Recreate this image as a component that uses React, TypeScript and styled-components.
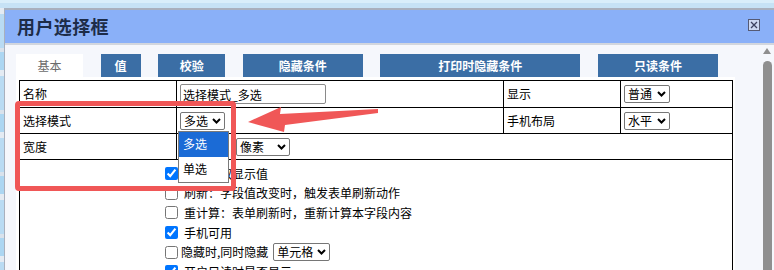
import React from "react";
import styled, { createGlobalStyle } from "styled-components";

const GlobalStyle = createGlobalStyle`
  html, body { margin: 0; padding: 0; }
  body {
    width: 774px;
    height: 270px;
    overflow: hidden;
    background: #d3e7f5;
    font-family: "Noto Sans CJK SC", "Noto Sans", sans-serif;
    font-size: 12px;
    color: #000;
  }
  * { box-sizing: border-box; }
`;

const Page = styled.div`
  position: relative;
  width: 774px;
  height: 270px;
  display: flex;
  flex-direction: column;
  overflow: hidden;
`;

const TopStrip = styled.div`
  height: 8px;
  flex: none;
  background: linear-gradient(#d9eefa 0 3px, #c6e2f5 3px 100%);
`;

const Stage = styled.div`
  flex: 1;
  display: flex;
  min-height: 0;
`;

const LeftStrip = styled.div`
  width: 4px;
  flex: none;
  background: repeating-linear-gradient(
    to bottom,
    #e4ebf3 0 6px,
    #b9dbf3 6px 40px,
    #d9e2ec 40px 44px,
    #acd6f2 44px 62px
  );
`;

const Window = styled.div`
  flex: 1;
  display: flex;
  flex-direction: column;
  border-top: 2px solid #a9b0bd;
  border-left: 1px solid #a9b0bd;
  min-width: 0;
`;

const Header = styled.div`
  height: 35px;
  flex: none;
  display: flex;
  align-items: center;
  justify-content: space-between;
  padding: 0 14px 2px 12px;
  background: #8ab0f8;
  border-bottom: 2px solid #d2d6de;
`;

const Title = styled.div`
  font-size: 18px;
  font-weight: bold;
  letter-spacing: 0.4px;
  color: #1d2c48;
  line-height: 1;
`;

const CloseBox = styled.div`
  width: 12px;
  height: 12px;
  display: flex;
  margin-top: -1px;
`;

const Body = styled.div`
  flex: 1;
  display: flex;
  background: #f5f7fc;
  min-height: 0;
`;

const Main = styled.div`
  width: 730px;
  flex: none;
  display: flex;
  flex-direction: column;
  padding: 9px 0 0 11px;
`;

const Tabs = styled.div`
  display: flex;
  gap: 17.6px;
  height: 23px;
  flex: none;
`;

const Tab = styled.div<{ $w: number; $active?: boolean }>`
  width: ${(p) => p.$w}px;
  height: 23px;
  display: flex;
  align-items: center;
  justify-content: center;
  background: ${(p) => (p.$active ? "#ffffff" : "#3b6ea5")};
  color: ${(p) => (p.$active ? "#6b6b6b" : "#ffffff")};
  font-weight: ${(p) => (p.$active ? "normal" : "bold")};
  font-size: 12px;
`;

const Panel = styled.div`
  width: 719px;
  flex: 1;
  background: #ffffff;
  padding: 3px 3px 0 3px;
`;

const Table = styled.table`
  width: 713px;
  border-collapse: collapse;
  table-layout: fixed;
`;

const Row = styled.tr<{ $h?: number }>`
  height: ${(p) => (p.$h ? `${p.$h}px` : "auto")};
`;

const Cell = styled.td`
  border: 1px solid #000;
  padding: 0 3px;
  vertical-align: middle;
  line-height: 16px;
  white-space: nowrap;
`;

const OptionsCell = styled.td`
  border: 1px solid #000;
  padding: 4px 0 0 141px;
  vertical-align: top;
  height: 140px;
`;

const TextInput = styled.input<{ $w: number }>`
  width: ${(p) => p.$w}px;
  height: 20px;
  border: 1px solid #8a8a8a;
  border-radius: 2px;
  padding: 0 2px;
  font-family: inherit;
  font-size: 12px;
  line-height: 16px;
  color: #000;
  background: #fff;
  vertical-align: middle;
`;

const SelectBox = styled.span<{ $w: number; $ml?: number }>`
  width: ${(p) => p.$w}px;
  height: 18px;
  margin-left: ${(p) => p.$ml ?? 0}px;
  display: inline-flex;
  align-items: center;
  justify-content: space-between;
  border: 1px solid #767676;
  border-radius: 2px;
  padding: 0 3px 0 3px;
  font-size: 12px;
  line-height: 16px;
  color: #000;
  background: #fff;
  vertical-align: middle;
  flex: none;
`;

const InlineGroup = styled.div`
  display: flex;
  align-items: center;
  gap: 7px;
`;

const SelectWrap = styled.span`
  position: relative;
  display: inline-flex;
  vertical-align: middle;
`;

const DropList = styled.div`
  position: absolute;
  left: -2px;
  top: calc(100% + 1px);
  width: 51px;
  height: 52px;
  border: 1px solid #7a7a7a;
  background: #fff;
  z-index: 5;
  display: flex;
  flex-direction: column;
  line-height: 16px;
`;

const DropOption = styled.div<{ $selected?: boolean }>`
  height: 25px;
  display: flex;
  align-items: center;
  padding-left: 4px;
  font-size: 12px;
  background: ${(p) => (p.$selected ? "#1b6bd6" : "#fff")};
  color: ${(p) => (p.$selected ? "#fff" : "#000")};
`;

const CheckList = styled.div`
  display: flex;
  flex-direction: column;
`;

const CheckItem = styled.label<{ $tight?: boolean }>`
  height: 19.6px;
  display: flex;
  align-items: center;
  font-size: 12px;
  line-height: 16px;
  white-space: nowrap;
  gap: ${(p) => (p.$tight ? "0px" : "3px")};
  input {
    width: 13px;
    height: 13px;
    margin: 0 3px 0 4px;
  }
`;

const ScrollCol = styled.div`
  flex: 1;
  display: flex;
  justify-content: flex-end;
  padding-right: 2px;
`;

const ScrollTrack = styled.div`
  width: 10px;
  display: flex;
  flex-direction: column;
  align-items: center;
  padding-top: 3px;
`;

const UpArrow = styled.div`
  width: 0;
  height: 0;
  border-left: 4px solid transparent;
  border-right: 4px solid transparent;
  border-bottom: 6px solid #8f8f8f;
`;

const Thumb = styled.div`
  width: 9px;
  flex: 1;
  margin-top: 7px;
  background: #8f8f8f;
  border-radius: 5px 5px 0 0;
`;

const RedBox = styled.div`
  position: absolute;
  left: 15px;
  top: 101px;
  width: 221px;
  height: 90px;
  border: 5px solid #f05757;
  border-radius: 4px;
  z-index: 10;
  pointer-events: none;
`;

const ArrowSvg = styled.svg`
  position: absolute;
  left: 245px;
  top: 104px;
  z-index: 10;
  pointer-events: none;
`;

const noop = () => {};

function Chevron() {
  return (
    <svg width="9" height="6" viewBox="0 0 9 6">
      <path d="M1 1 L4.5 4.5 L8 1" fill="none" stroke="#000" strokeWidth="2" />
    </svg>
  );
}

function FakeSelect({ value, w, ml }: { value: string; w: number; ml?: number }) {
  return (
    <SelectBox role="combobox" $w={w} $ml={ml}>
      <span>{value}</span>
      <Chevron />
    </SelectBox>
  );
}

export default function App() {
  return (
    <>
      <GlobalStyle />
      <Page>
        <TopStrip />
        <Stage>
          <LeftStrip />
          <Window>
            <Header>
              <Title>用户选择框</Title>
              <CloseBox>
                <svg width="12" height="12" viewBox="0 0 12 12">
                  <rect x="0.5" y="0.5" width="11" height="11" fill="#cdd8f2" stroke="#555a74" />
                  <path d="M3 3 L9 9 M9 3 L3 9" stroke="#3c4160" strokeWidth="1.3" />
                </svg>
              </CloseBox>
            </Header>
            <Body>
              <Main>
                <Tabs>
                  <Tab $w={67} $active>基本</Tab>
                  <Tab $w={40}>值</Tab>
                  <Tab $w={67}>校验</Tab>
                  <Tab $w={120}>隐藏条件</Tab>
                  <Tab $w={200}>打印时隐藏条件</Tab>
                  <Tab $w={120}>只读条件</Tab>
                </Tabs>
                <Panel>
                  <Table>
                    <colgroup>
                      <col style={{ width: 157 }} />
                      <col style={{ width: 327 }} />
                      <col style={{ width: 117 }} />
                      <col style={{ width: 112 }} />
                    </colgroup>
                    <tbody>
                      <Row $h={27}>
                        <Cell>名称</Cell>
                        <Cell>
                          <TextInput $w={146} value="选择模式_多选" onChange={noop} />
                        </Cell>
                        <Cell>显示</Cell>
                        <Cell>
                          <FakeSelect w={46} value="普通" />
                        </Cell>
                      </Row>
                      <Row $h={26}>
                        <Cell>选择模式</Cell>
                        <Cell>
                          <SelectWrap>
                            <FakeSelect w={45} value="多选" />
                            <DropList>
                              <DropOption $selected>多选</DropOption>
                              <DropOption>单选</DropOption>
                            </DropList>
                          </SelectWrap>
                        </Cell>
                        <Cell>手机布局</Cell>
                        <Cell>
                          <FakeSelect w={46} value="水平" />
                        </Cell>
                      </Row>
                      <Row $h={26}>
                        <Cell>宽度</Cell>
                        <Cell colSpan={3}>
                          <InlineGroup>
                            <TextInput $w={49} value="" onChange={noop} />
                            <FakeSelect w={54} value="像素" />
                          </InlineGroup>
                        </Cell>
                      </Row>
                      <Row>
                        <OptionsCell colSpan={4}>
                          <CheckList>
                            <CheckItem>
                              <input type="checkbox" defaultChecked />
                              导出时取显示值
                            </CheckItem>
                            <CheckItem>
                              <input type="checkbox" />
                              刷新：字段值改变时，触发表单刷新动作
                            </CheckItem>
                            <CheckItem>
                              <input type="checkbox" />
                              重计算：表单刷新时，重新计算本字段内容
                            </CheckItem>
                            <CheckItem>
                              <input type="checkbox" defaultChecked />
                              手机可用
                            </CheckItem>
                            <CheckItem $tight>
                              <input type="checkbox" />
                              隐藏时,同时隐藏
                              <FakeSelect w={57} ml={5} value="单元格" />
                            </CheckItem>
                            <CheckItem>
                              <input type="checkbox" defaultChecked />
                              开启只读时是否显示
                            </CheckItem>
                          </CheckList>
                        </OptionsCell>
                      </Row>
                    </tbody>
                  </Table>
                </Panel>
              </Main>
              <ScrollCol>
                <ScrollTrack>
                  <UpArrow />
                  <Thumb />
                </ScrollTrack>
              </ScrollCol>
            </Body>
          </Window>
        </Stage>
        <RedBox />
        <ArrowSvg width="136" height="32" viewBox="0 0 136 32">
          <polygon points="3,18 36,3 35,10 133,5 133,9 40,21 39,28" fill="#f05757" />
        </ArrowSvg>
      </Page>
    </>
  );
}
